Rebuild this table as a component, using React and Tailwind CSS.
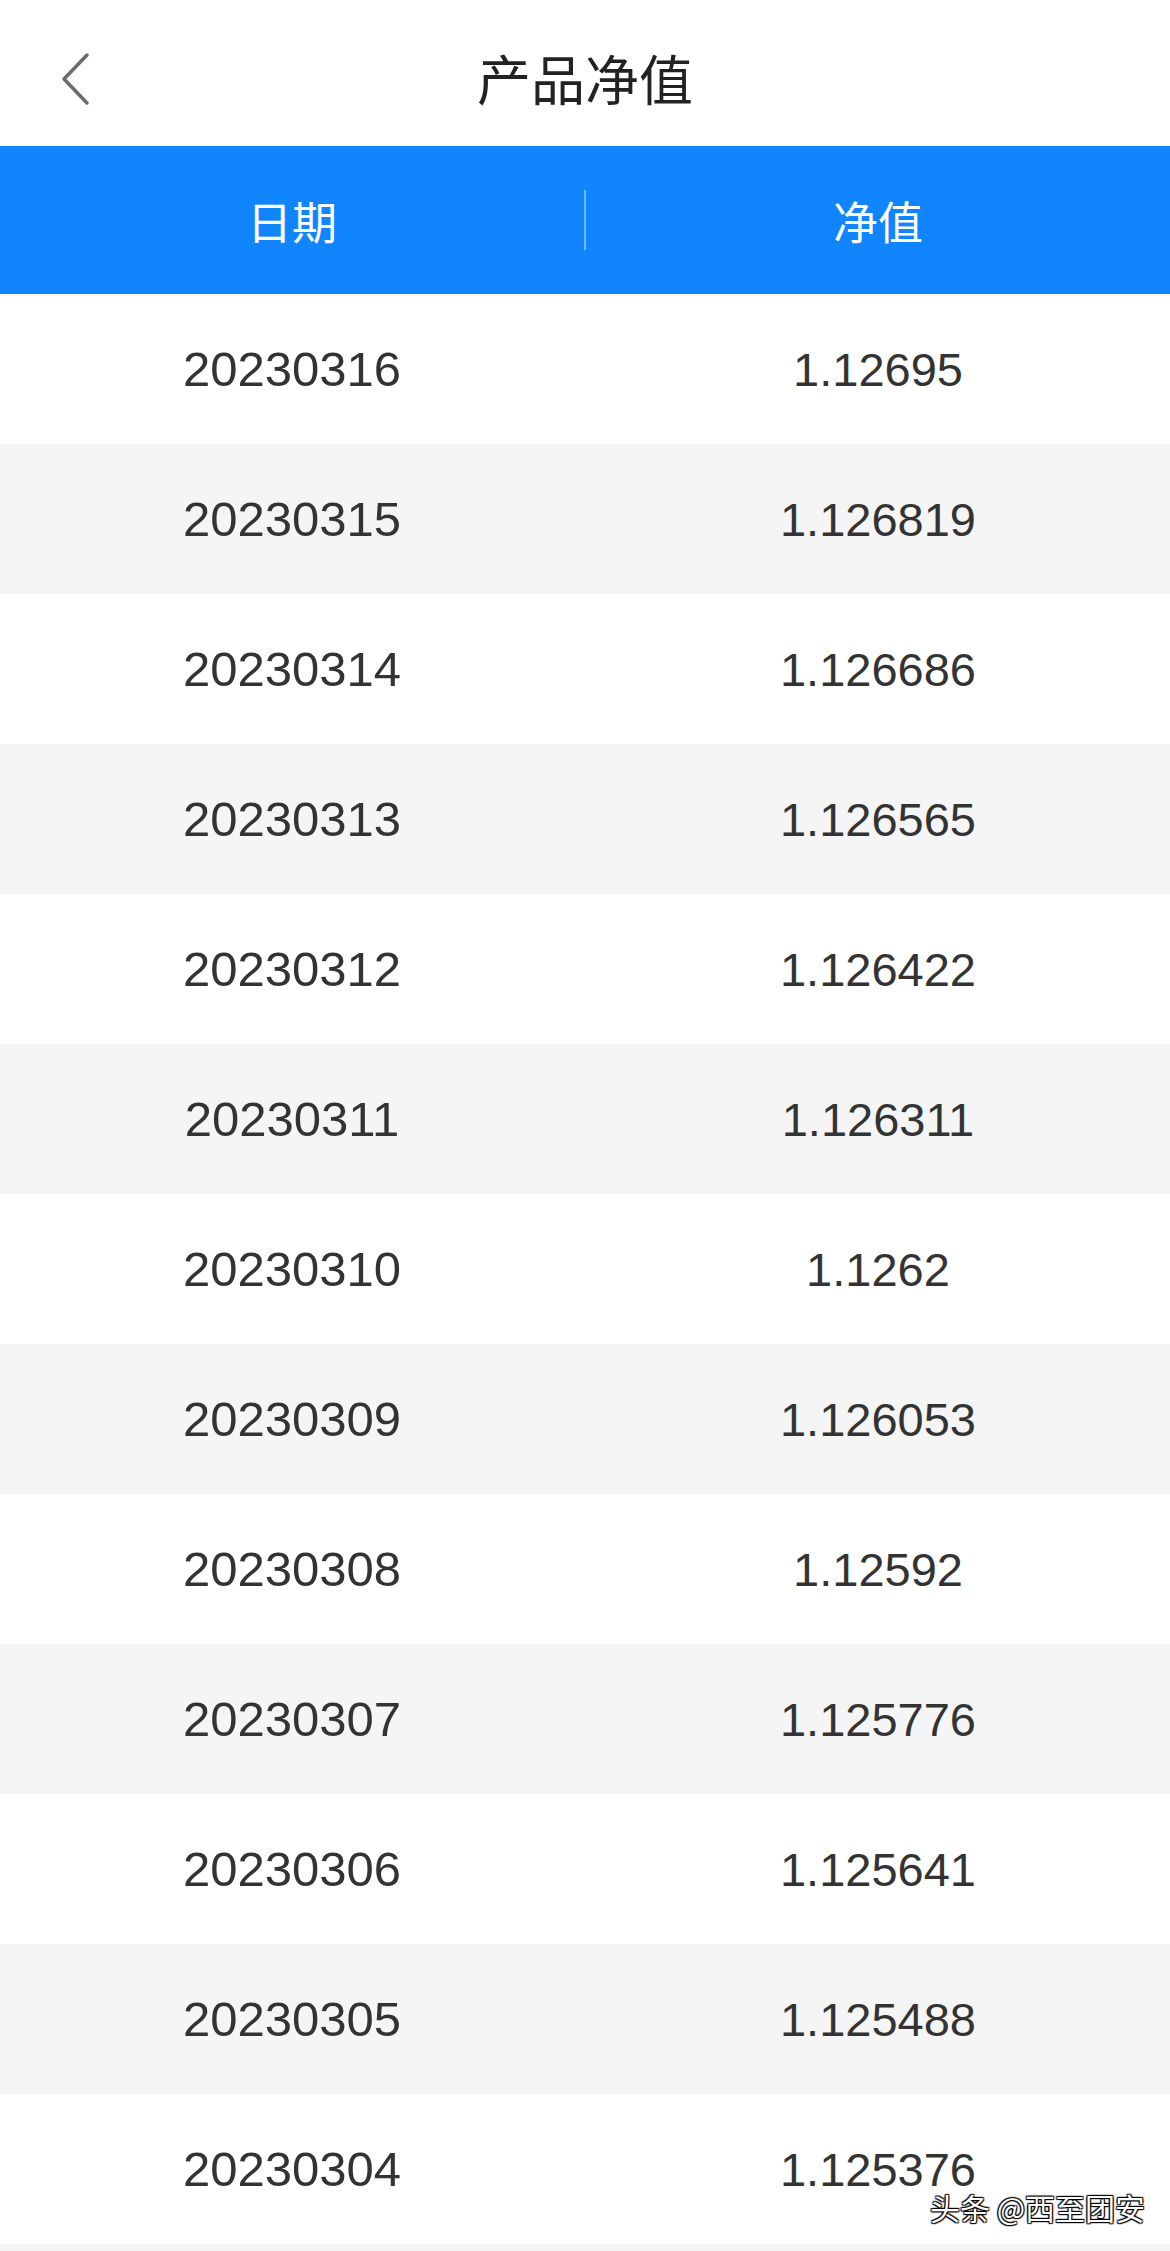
import React from "react";

const rows = [
  ["20230316", "1.12695"],
  ["20230315", "1.126819"],
  ["20230314", "1.126686"],
  ["20230313", "1.126565"],
  ["20230312", "1.126422"],
  ["20230311", "1.126311"],
  ["20230310", "1.1262"],
  ["20230309", "1.126053"],
  ["20230308", "1.12592"],
  ["20230307", "1.125776"],
  ["20230306", "1.125641"],
  ["20230305", "1.125488"],
  ["20230304", "1.125376"],
];

export default function App() {
  return (
    <div
      className="w-[1170px] h-[2251px] overflow-hidden bg-white relative"
      style={{ fontFamily: '"Liberation Sans", "Noto Sans CJK SC", sans-serif' }}
    >
      <div className="h-[146px] relative flex items-center justify-center pt-[10px]">
        <svg
          className="absolute left-[58px] top-[52px]"
          width="34"
          height="54"
          viewBox="0 0 34 54"
          fill="none"
        >
          <path d="M29 3 L6 27 L29 51" stroke="#6b6b6b" strokeWidth="3.5" strokeLinecap="round" strokeLinejoin="round" />
        </svg>
        <div
          className="text-[54px] leading-none text-[#222222]"
          style={{ fontFamily: '"Noto Sans CJK SC", sans-serif' }}
        >
          产品净值
        </div>
      </div>
      <div className="h-[148px] bg-[#1085fd] flex items-center">
        <div
          className="flex-1 flex items-center justify-center text-white text-[45px] leading-none"
          style={{ fontFamily: '"Noto Sans CJK SC", sans-serif' }}
        >
          日期
        </div>
        <div className="w-[2px] h-[60px] bg-[#74bbff]"></div>
        <div
          className="flex-1 flex items-center justify-center text-white text-[45px] leading-none"
          style={{ fontFamily: '"Noto Sans CJK SC", sans-serif' }}
        >
          净值
        </div>
      </div>
      {rows.map(([d, v], i) => (
        <div
          key={d}
          className={
            "h-[150px] flex items-center text-[49px] text-[#333333] leading-none " +
            (i % 2 === 1 ? "bg-[#f5f5f5]" : "bg-white")
          }
        >
          <div className="flex-1 text-center">{d}</div>
          <div className="w-[2px]"></div>
          <div className="flex-1 text-center text-[47px]">{v}</div>
        </div>
      ))}
      <div className="h-[20px] bg-[#f5f5f5]"></div>
      <div
        className="absolute left-[930px] top-[2192px] text-[30px] leading-none text-white whitespace-nowrap"
        style={{
          fontFamily: '"Noto Sans CJK SC", sans-serif',
          textShadow:
            "1px 1px 1px #000, -1px -1px 1px #000, 1px -1px 1px #000, -1px 1px 1px #000",
        }}
      >
        头条 @西至团安
      </div>
    </div>
  );
}
